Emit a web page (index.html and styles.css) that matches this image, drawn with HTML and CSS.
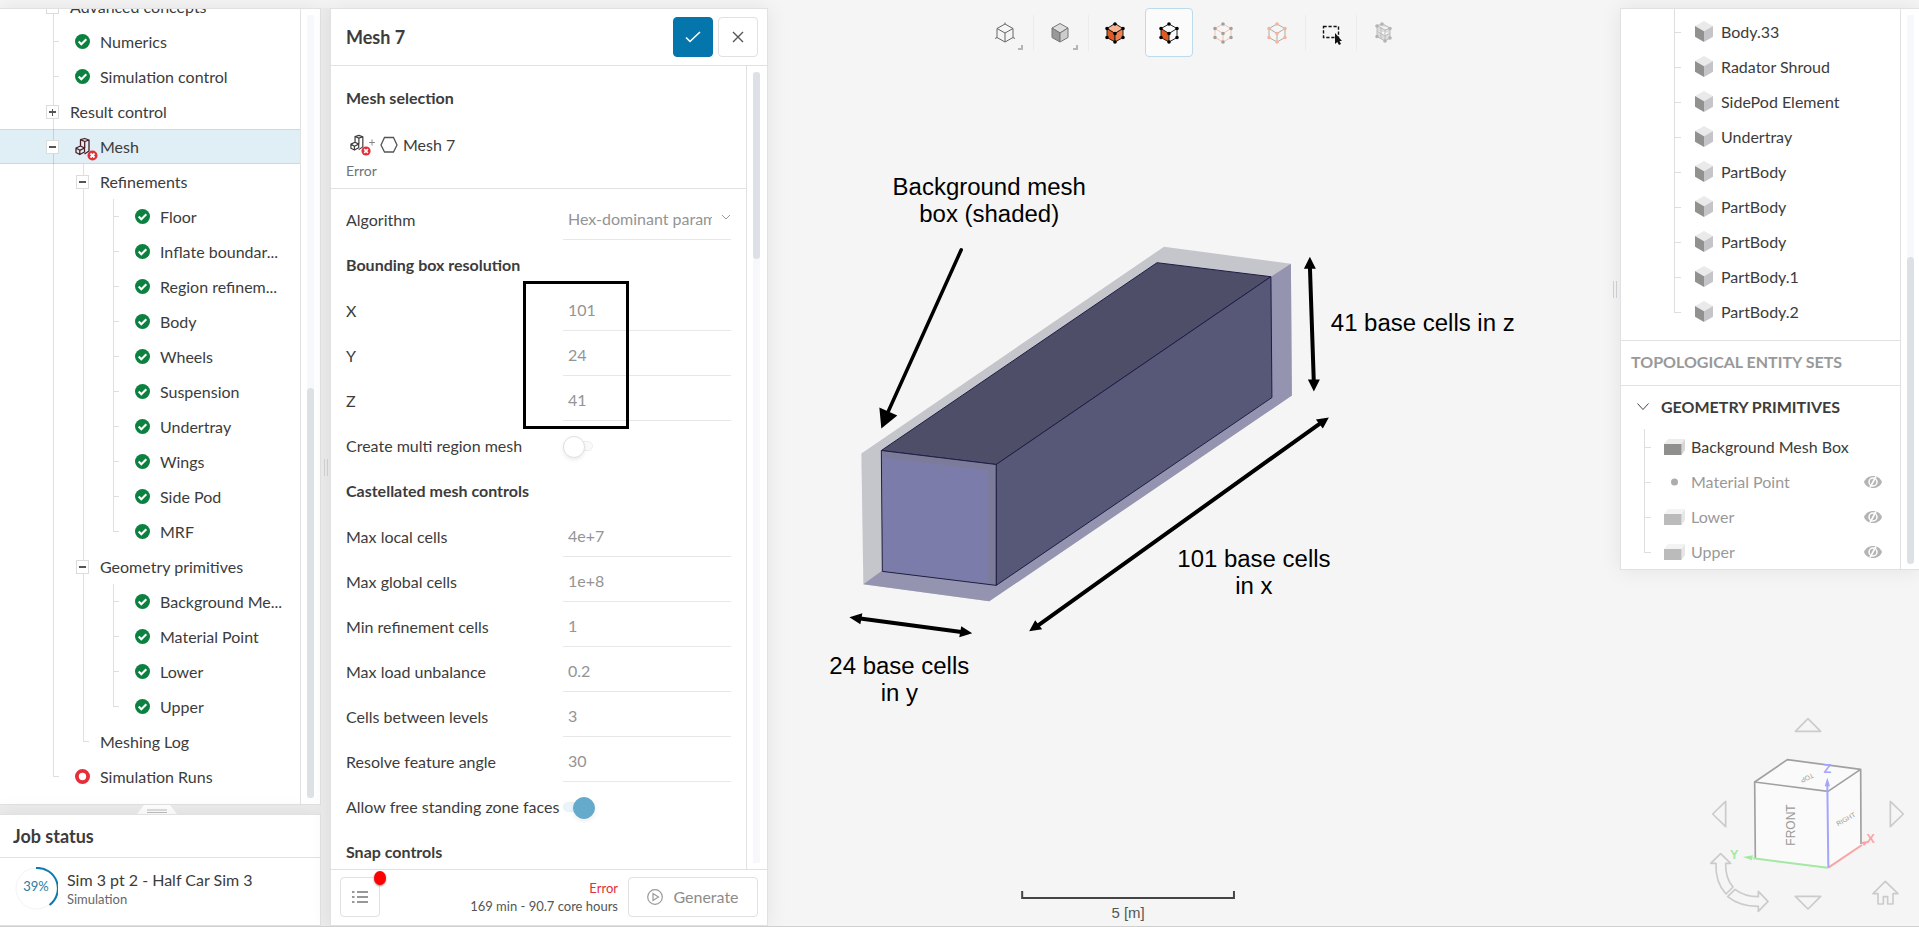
FILE: index.html
```html
<!DOCTYPE html>
<html lang="en">
<head>
<meta charset="utf-8">
<title>Mesh 7</title>
<link rel="stylesheet" href="styles.css">
</head>
<body>
<svg class="defs" width="0" height="0" aria-hidden="true">
  <symbol id="ok" viewBox="0 0 15 15"><circle cx="7.5" cy="7.5" r="7.5" fill="#0b8140"/><path d="M3.7 7.6l2.6 2.7 5-5.1" fill="none" stroke="#fff" stroke-width="2.1"/></symbol>
  <symbol id="ring" viewBox="0 0 15 15"><circle cx="7.5" cy="7.5" r="5.6" fill="#fff" stroke="#e52e38" stroke-width="3.8"/></symbol>
  <symbol id="meshfail" viewBox="0 0 24 25"><path transform="translate(1 1)" d="M4.500 1.700L8.700.5 13 2 8.700 3.500zM4.500 1.700V8M8.700 3.500V10M13 2v11l-4.500 3M0 10l4.500-2 4 2-4.700 2.300zM0 10v4.500l3.800 2 4.700-2.500v-4M3.800 12.300v4.200" fill="none" stroke="currentColor" stroke-width="1.300" stroke-linejoin="round"/><circle cx="17.500" cy="18.500" r="5" fill="#e52e38"/><path d="M15.500 16.500l4 4M19.500 16.500l-4 4" stroke="#fff" stroke-width="1.800"/></symbol>
  <symbol id="cube" viewBox="0 0 18 21"><path d="M9 0l9 5-9 5.300L0 5z" fill="#eaeaea"/><path d="M0 5l9 5.300V21l-9-5.300z" fill="#91918f"/><path d="M18 5l-9 5.300V21l9-5.300z" fill="#c5c5c9"/></symbol>
  <symbol id="box" viewBox="0 0 21 16"><path d="M4 0h17l-3.500 5H0z" fill="#ececec"/><path d="M21 0v11l-3.500 5V5z" fill="#d6d6d6"/><path d="M0 5h17.500v11H0z" fill="#8f8f8e"/></symbol>
  <symbol id="eye" viewBox="0 0 18 12"><path d="M0 6C3-2 15-2 18 6 15 14 3 14 0 6z" fill="#b4b4b4"/><circle cx="9" cy="6" r="4" fill="none" stroke="#fff" stroke-width="1.500"/><path d="M6 11.500L12 .5" stroke="#fff" stroke-width="1.600"/></symbol>
</svg>
<div class="app">
  <div class="sidebar">
    <nav class="panel tree-panel" aria-label="Simulation tree">
      <div class="tree-view">
        <ul class="tree">
          <li><div class="row"><button class="toggle" aria-label="Collapse"></button><span class="label">Advanced concepts</span></div></li>
          <li><div class="row leaf"><svg class="state"><use href="#ok"/></svg><span class="label">Numerics</span></div></li>
          <li><div class="row leaf"><svg class="state"><use href="#ok"/></svg><span class="label">Simulation control</span></div></li>
          <li><div class="row"><button class="toggle plus" aria-label="Expand"></button><span class="label">Result control</span></div></li>
          <li><div class="row selected"><button class="toggle" aria-label="Collapse"></button><svg class="state mesh"><use href="#meshfail"/></svg><span class="label">Mesh</span></div>
            <ul>
              <li><div class="row"><button class="toggle" aria-label="Collapse"></button><span class="label">Refinements</span></div>
                <ul>
                  <li><div class="row leaf"><svg class="state"><use href="#ok"/></svg><span class="label">Floor</span></div></li>
                  <li><div class="row leaf"><svg class="state"><use href="#ok"/></svg><span class="label">Inflate boundar...</span></div></li>
                  <li><div class="row leaf"><svg class="state"><use href="#ok"/></svg><span class="label">Region refinem...</span></div></li>
                  <li><div class="row leaf"><svg class="state"><use href="#ok"/></svg><span class="label">Body</span></div></li>
                  <li><div class="row leaf"><svg class="state"><use href="#ok"/></svg><span class="label">Wheels</span></div></li>
                  <li><div class="row leaf"><svg class="state"><use href="#ok"/></svg><span class="label">Suspension</span></div></li>
                  <li><div class="row leaf"><svg class="state"><use href="#ok"/></svg><span class="label">Undertray</span></div></li>
                  <li><div class="row leaf"><svg class="state"><use href="#ok"/></svg><span class="label">Wings</span></div></li>
                  <li><div class="row leaf"><svg class="state"><use href="#ok"/></svg><span class="label">Side Pod</span></div></li>
                  <li><div class="row leaf"><svg class="state"><use href="#ok"/></svg><span class="label">MRF</span></div></li>
                </ul>
              </li>
              <li><div class="row"><button class="toggle" aria-label="Collapse"></button><span class="label">Geometry primitives</span></div>
                <ul>
                  <li><div class="row leaf"><svg class="state"><use href="#ok"/></svg><span class="label">Background Me...</span></div></li>
                  <li><div class="row leaf"><svg class="state"><use href="#ok"/></svg><span class="label">Material Point</span></div></li>
                  <li><div class="row leaf"><svg class="state"><use href="#ok"/></svg><span class="label">Lower</span></div></li>
                  <li><div class="row leaf"><svg class="state"><use href="#ok"/></svg><span class="label">Upper</span></div></li>
                </ul>
              </li>
              <li><div class="row leaf"><span class="label">Meshing Log</span></div></li>
            </ul>
          </li>
          <li><div class="row leaf"><svg class="state"><use href="#ring"/></svg><span class="label">Simulation Runs</span></div></li>
        </ul>
      </div>
      <div class="scroll low"><span class="thumb"></span></div>
    </nav>
    <div class="splitter"><svg width="40" height="9" viewBox="0 0 40 9"><path d="M0 9L7 0h26l7 9z" fill="#fff"/><path d="M10 5h20M10 7.500h20" stroke="#bdbdbd"/></svg></div>
    <section class="panel jobs">
      <h2>Job status</h2>
      <div class="job">
        <svg class="progress" width="43" height="43" viewBox="0 0 43 43"><circle cx="21.500" cy="21.500" r="20.500" fill="none" stroke="#f3f3f3"/><path d="M21 1a20.500 20.500 0 0 1 13.500 37" fill="none" stroke="#0b7bb0" stroke-width="2"/><text x="21" y="24" text-anchor="middle">39%</text></svg>
        <div><div class="job-name">Sim 3 pt 2 - Half Car Sim 3</div><div class="job-kind">Simulation</div></div>
      </div>
    </section>
  </div>
  <div class="gutter"><span class="grip"></span></div>

  <form class="panel settings">
    <header>
      <h1>Mesh 7</h1>
      <button type="button" class="btn primary" aria-label="Save"><svg width="16" height="12" viewBox="0 0 16 12"><path d="M1 6.500l4 4L15 1" fill="none" stroke="#fff" stroke-width="1.600"/></svg></button>
      <button type="button" class="btn" aria-label="Close"><svg width="12" height="12" viewBox="0 0 12 12"><path d="M1 1l10 10M11 1L1 11" stroke="#555" stroke-width="1.400"/></svg></button>
    </header>
    <div class="settings-body">
      <div class="fields">
        <div class="selection">
          <h3>Mesh selection</h3>
          <div class="mesh-line"><svg class="mesh-icon" width="28" height="22" viewBox="0 0 28 22"><use href="#meshfail" width="22" height="23"/><path d="M22 5.500v6M19 8.500h6" stroke="#888"/></svg><svg width="18" height="18" viewBox="0 0 18 18"><path d="M4.500 1.500h9L17 9l-3.500 7h-9L1 9z" fill="none" stroke="#555" stroke-width="1.300"/></svg><span>Mesh 7</span></div>
          <div class="mesh-state">Error</div>
        </div>
        <div class="controls">
          <div class="field"><label for="alg">Algorithm</label><span class="select"><select id="alg"><option>Hex-dominant parametric</option></select><svg width="10" height="6" viewBox="0 0 10 6"><path d="M1 1l4 4 4-4" fill="none" stroke="#999"/></svg></span></div>
          <h3>Bounding box resolution</h3>
          <div class="resolution">
            <div class="field"><label for="rx">X</label><input id="rx" value="101"></div>
            <div class="field"><label for="ry">Y</label><input id="ry" value="24"></div>
            <div class="field"><label for="rz">Z</label><input id="rz" value="41"></div>
            <span class="marker"></span>
          </div>
          <div class="field"><label for="multi">Create multi region mesh</label><input id="multi" class="switch" type="checkbox"></div>
          <h3>Castellated mesh controls</h3>
          <div class="field"><label for="mlc">Max local cells</label><input id="mlc" value="4e+7"></div>
          <div class="field"><label for="mgc">Max global cells</label><input id="mgc" value="1e+8"></div>
          <div class="field"><label for="mrc">Min refinement cells</label><input id="mrc" value="1"></div>
          <div class="field"><label for="mlu">Max load unbalance</label><input id="mlu" value="0.2"></div>
          <div class="field"><label for="cbl">Cells between levels</label><input id="cbl" value="3"></div>
          <div class="field"><label for="rfa">Resolve feature angle</label><input id="rfa" value="30"></div>
          <div class="field"><label for="zone">Allow free standing zone faces</label><input id="zone" class="switch" type="checkbox" checked></div>
          <h3>Snap controls</h3>
        </div>
      </div>
      <div class="scroll"><span class="thumb"></span></div>
    </div>
    <footer>
      <button type="button" class="btn list" aria-label="Event log"><svg width="16" height="12" viewBox="0 0 16 12"><path d="M0 1h2.500M0 6h2.500M0 11h2.500M5 1h11M5 6h11M5 11h11" stroke="#777" stroke-width="1.400"/></svg><span class="dot"></span></button>
      <div class="estimate"><span class="error">Error</span><span>169 min - 90.7 core hours</span></div>
      <button type="button" class="btn generate"><svg width="16" height="16" viewBox="0 0 16 16"><g fill="none" stroke="#999" stroke-width="1.200"><circle cx="8" cy="8" r="7.300"/><path d="M6 4.500v7L11.500 8z"/></g></svg>Generate</button>
    </footer>
  </form>

  <main class="viewer">
    <svg class="scene" viewBox="768 0 852 927">
      <path d="M1164 247l127 17 1 132-303 206-126-17-2-131z" fill="#c5c5cc"/>
      <path d="M1271 277l20-13 1 132-303 206-126-17 19-14z" fill="#9494b0"/>
      <g stroke="#1d1d45" stroke-linejoin="round">
        <path d="M1157 263l114 14-275 188-115-14z" fill="#4e4e69"/>
        <path d="M1271 277l1 121-276 188V465z" fill="#575778"/>
        <path d="M881 451l115 14v121l-114-14z" fill="#7c7c9a"/>
      </g>
      <path d="M882 458l106 13v113l-105-13z" fill="#7c7cab"/>
      <g stroke="#000" stroke-width="4">
        <path d="M961 250l-74 164" stroke-width="3.500" stroke-linecap="round"/>
        <path d="M1310 266l4 118M1320 424l-282 202M858 619l105 14"/>
      </g>
      <path d="M881 429l-2-21 18 8zM1310 257l6 12h-12zM1314 392l6-12h-12zM1329 418l-6 11-7-9zM1029 632l6-11 7 9zM849 618l13-4-2 11zM972 634l-13 4 2-11z"/>
      <g class="note" text-anchor="middle">
        <text x="989" y="195">Background mesh</text><text x="989" y="222">box (shaded)</text>
        <text x="1423" y="331">41 base cells in z</text>
        <text x="1254" y="568">101 base cells</text><text x="1254" y="595">in x</text>
        <text x="899" y="675">24 base cells</text><text x="899" y="702">in y</text>
      </g>
      <path d="M1022 892v7h212v-7" fill="none" stroke="#444" stroke-width="2"/>
      <text class="scale" x="1128" y="919" text-anchor="middle">5 [m]</text>
    </svg>
    <div class="toolbar">
      <button aria-label="Wireframe"><svg viewBox="0 0 24 24"><path d="M12 3l8 4.500v9L12 21l-8-4.500v-9zM4 7.500l8 4.500 8-4.500M12 12v9M12 1.500V3M2 17.500l2-1M22 17.500l-2-1" fill="none" stroke="#666"/></svg><i class="corner"></i></button>
      <button aria-label="Shaded" class="sep"><svg viewBox="0 0 24 24"><g stroke="#777"><path d="M12 2.500l8 4.500-8 5-8-5z" fill="#ddd"/><path d="M4 7l8 5v9l-8-4.500z" fill="#999"/><path d="M20 7l-8 5v9l8-4.500z" fill="#ccc"/></g></svg><i class="corner"></i></button>
      <button aria-label="Volumes" class="sep"><svg viewBox="0 0 24 24"><g stroke="#222"><path d="M12 2.500l8 5-8 5-8-5z" fill="#f6b491"/><path d="M4 7.500l8 5V21l-8-4.500z" fill="#df5a20"/><path d="M20 7.500l-8 5V21l8-4.500z" fill="#ef8150"/></g><path class="dots" d="M12 3h0M4 7.500h0M20 7.500h0M12 12.500h0M4 16.500h0M20 16.500h0M12 21h0" stroke="#000"/></svg></button>
      <button aria-label="Faces" class="active"><svg viewBox="0 0 24 24"><path d="M4 7.500l8 5V21l-8-4.500z" fill="#df5a20"/><path d="M12 3l8 4.500v9L12 21l-8-4.500v-9zM4 7.500l8 5 8-5M12 12.500V21" fill="none" stroke="#222"/><path class="dots" d="M12 3h0M4 7.500h0M20 7.500h0M12 12.500h0M4 16.500h0M20 16.500h0M12 21h0" stroke="#000"/></svg></button>
      <button aria-label="Edges"><svg viewBox="0 0 24 24"><path d="M12 3l8 4.500v9L12 21l-8-4.500v-9zM4 7.500l8 5 8-5M12 12.500V21" fill="none" stroke="#f7c3aa"/><path class="dots" d="M12 3h0M4 7.500h0M20 7.500h0M12 12.500h0M4 16.500h0M20 16.500h0M12 21h0" stroke="#a0a0a0"/></svg></button>
      <button aria-label="Vertices"><svg viewBox="0 0 24 24"><path d="M12 3l8 4.500v9L12 21l-8-4.500v-9zM4 7.500l8 5 8-5M12 12.500V21" fill="none" stroke="#ababab"/><path class="dots" d="M12 3h0M4 7.500h0M20 7.500h0M12 12.500h0M4 16.500h0M20 16.500h0M12 21h0" stroke="#f7b597"/></svg></button>
      <button aria-label="Box selection" class="sep"><svg viewBox="0 0 24 24"><path d="M3.500 5.500h15v11h-15z" fill="none" stroke="#111" stroke-width="1.400" stroke-dasharray="3.200 1.800"/><path d="M15 12v11l2.300-2 1.700 3 2-1-1.500-3h2.500z" fill="#111"/></svg></button>
      <button aria-label="Clipping" class="sep last"><svg viewBox="0 0 24 24"><path d="M6 4.500l6-1.500 7 4v10l-5 3-8-4.500zM6 4.500l8 4.500 5-2M14 9v11M6 10l8 5 5-3M10 6.500v11.500" fill="#dcdcdc" stroke="#bcbcbc"/><path class="dots" d="M11 3h0M6 5h0M19 7.500h0M6 15.500h0M14 20h0M19 17h0" stroke="#b4b4b4"/></svg></button>
    </div>
    <span class="grip"></span>
  </main>

  <div class="rail">
    <aside class="panel geometry">
      <div class="geo-view">
        <ul class="parts">
          <li><svg><use href="#cube"/></svg>Body.33</li>
          <li><svg><use href="#cube"/></svg>Radator Shroud</li>
          <li><svg><use href="#cube"/></svg>SidePod Element</li>
          <li><svg><use href="#cube"/></svg>Undertray</li>
          <li><svg><use href="#cube"/></svg>PartBody</li>
          <li><svg><use href="#cube"/></svg>PartBody</li>
          <li><svg><use href="#cube"/></svg>PartBody</li>
          <li><svg><use href="#cube"/></svg>PartBody.1</li>
          <li><svg><use href="#cube"/></svg>PartBody.2</li>
        </ul>
        <h4 class="muted">TOPOLOGICAL ENTITY SETS</h4>
        <h4 class="open"><svg width="12" height="7" viewBox="0 0 12 7"><path d="M.5.500l5.500 6 5.500-6" fill="none" stroke="#444"/></svg>GEOMETRY PRIMITIVES</h4>
        <ul class="prims">
          <li><svg class="kind"><use href="#box"/></svg>Background Mesh Box</li>
          <li class="hidden"><svg class="kind" viewBox="0 0 21 16"><circle cx="10.500" cy="8" r="3.500" fill="#777"/></svg>Material Point<button aria-label="Show"><svg><use href="#eye"/></svg></button></li>
          <li class="hidden"><svg class="kind"><use href="#box"/></svg>Lower<button aria-label="Show"><svg><use href="#eye"/></svg></button></li>
          <li class="hidden"><svg class="kind"><use href="#box"/></svg>Upper<button aria-label="Show"><svg><use href="#eye"/></svg></button></li>
        </ul>
      </div>
      <div class="scroll geo"><span class="thumb"></span></div>
    </aside>
    <svg class="navcube" viewBox="0 0 687 681">
      <g fill="none" stroke="#cbcbcb" stroke-width="5" stroke-linejoin="round">
        <path d="M354 59l38 38h-76zM354 630l38-38h-76zM68 345l39-38v76zM640 345l-39-38v76z"/>
        <path d="M92 464l30 29h-15c-1 30 5 52 22 71l-21 21c-23-25-32-55-30-92H62z"/>
        <path d="M135 571c18 14 40 22 70 22v-16l29 30-29 30v-15c-38 0-68-9-92-29z"/>
        <path d="M586 547l38 37h-15v31h-16v-22h-13v22h-16v-31h-15z"/>
      </g>
      <path d="M194 249l98-67 221 29v224L415 506l-219-29z" fill="#fafafa"/>
      <path d="M196 477l-2-228 98-67 220 29 1 224M194 249l220 28 98-66" fill="none" stroke="#a0a0a0" stroke-width="5" stroke-linejoin="round"/>
      <text class="face" transform="translate(315 440) rotate(-90)">FRONT</text>
      <text class="face small" transform="translate(444 382) rotate(-30)">RIGHT</text>
      <text class="face tiny" transform="translate(367 222) rotate(155)">TOP</text>
      <g stroke-width="6"><path d="M415 506L516 438" stroke="#f9a5a5"/><path d="M413 506L190 478" stroke="#a3e8a3"/><path d="M415 506L412 258" stroke="#a5a5fb"/></g>
      <path d="M536 426l-14 15-9-12z" fill="#f9a5a5"/><path d="M159 474l30-5-3 15z" fill="#a3e8a3"/><path d="M412 236l8 26h-16z" fill="#a5a5fb"/>
      <g class="axis" text-anchor="middle"><text x="412" y="223" fill="#a5a5fb">Z</text><text x="542" y="433" fill="#f9a5a5">X</text><text x="133" y="481" fill="#a3e8a3">Y</text></g>
    </svg>
  </div>
</div>
</body>
</html>
```
FILE: styles.css
```css
* { box-sizing: border-box; }
body { margin: 0; background: #f5f5f5; color: #3c3c3c; font: 16px/20px Lato, "Liberation Sans", sans-serif; }
ul { list-style: none; margin: 0; padding: 0; }
h1, h2, h3, h4 { margin: 0; font-weight: 700; }
button, input, select { font: inherit; color: inherit; margin: 0; }
svg { display: block; flex: none; }
.defs { position: absolute; }
.app { display: flex; height: 100vh; padding-top: 8px; border-bottom: 1px solid #cfcfcf; overflow: hidden; }
.panel { background: #fff; border: 1px solid #e1e1e1; box-shadow: 0 0 20px rgba(0, 0, 0, .08); }

/* simulation tree */
.sidebar { display: flex; flex-direction: column; flex: none; width: 321px; }
.tree-panel { display: flex; flex: 1; min-height: 0; border-left: 0; }
.tree-view { display: flex; flex-direction: column; justify-content: flex-end; flex: 1; min-width: 0; overflow: hidden; padding-bottom: 10px; border-right: 1px solid #e1e1e1; }
.tree li { position: relative; --level: 0px; }
.tree ul li { --level: 30px; }
.tree ul ul li { --level: 60px; }
.tree li::before { content: ""; position: absolute; z-index: 1; left: calc(53px + var(--level)); top: 0; bottom: 0; border-left: 1px solid rgba(0, 0, 0, .12); }
.tree li:last-child::before { bottom: auto; height: 18px; }
.row { position: relative; display: flex; align-items: center; height: 35px; padding: 0 12px 0 calc(46px + var(--level)); }
.row.selected { background: #e0eef5; border: solid #bcdfec; border-width: 1px 0; }
.toggle { position: relative; z-index: 2; flex: none; width: 13px; height: 14px; margin-right: 11px; padding: 0; border: 1px solid #dcdcdc; background: #fff; }
.toggle::before { content: ""; position: absolute; left: 2px; top: 5px; width: 7px; height: 2px; background: #555; }
.toggle.plus::after { content: ""; position: absolute; left: 5px; top: 3px; width: 1px; height: 7px; background: #555; }
.leaf::before { content: ""; width: 5px; margin: 0 11px 0 8px; border-top: 1px solid #dedede; }
.state { width: 15px; height: 15px; margin: 0 10px 0 5px; }
.state.mesh { width: 24px; height: 25px; margin: 5px 1px 0 5px; color: #4a1d24; }
.label { white-space: nowrap; }
.scroll { display: flex; flex: none; width: 19px; padding: 6px; background: linear-gradient(#f6f8fb, #f6f8fb) 6px 6px / 7px calc(100% - 12px) no-repeat; }
.thumb { width: 7px; height: 187px; border-radius: 4px; background: #dde0e6; }
.low { align-items: flex-end; }
.low .thumb { height: 410px; background: #dce1e5; }
.splitter { display: flex; justify-content: center; align-items: flex-end; height: 9px; padding-right: 7px; background: #ececec; }
.jobs { border-left: 0; }
.jobs h2 { height: 43px; padding-left: 13px; border-bottom: 1px solid #e1e1e1; font-size: 18px; line-height: 42px; }
.job { display: flex; align-items: center; gap: 9px; height: 67px; padding: 0 15px 6px; }
.progress text { fill: #2a7ba2; font-size: 13px; }
.job-kind { color: #666; font-size: 13px; line-height: 18px; }
.gutter { display: flex; align-items: center; justify-content: center; flex: none; width: 9px; background: #ececec; }
.grip { width: 4px; height: 17px; border: solid #d0d4d8; border-width: 0 1px; }

/* mesh settings */
.settings { display: flex; flex-direction: column; flex: none; width: 438px; }
.settings header { display: flex; align-items: center; gap: 5px; height: 57px; padding: 0 9px 0 15px; border-bottom: 1px solid #e1e1e1; }
h1 { flex: 1; font-size: 18px; }
.btn { position: relative; display: flex; align-items: center; justify-content: center; width: 40px; height: 40px; padding: 0; border: 1px solid #e1e1e1; border-radius: 4px; background: #fff; }
.btn.primary { background: #0576ab; border-color: #0576ab; }
.settings-body { display: flex; flex: 1; min-height: 0; }
.settings-body .scroll { width: 20px; }
.fields { flex: 1; min-width: 0; overflow: hidden; border-right: 1px solid #e1e1e1; }
h3 { font-size: 16px; }
.selection { height: 123px; padding: 22px 15px 0; border-bottom: 1px solid #e1e1e1; }
.mesh-line { display: flex; align-items: center; gap: 5px; height: 34px; margin: 20px 0 0 4px; }
.mesh-icon { margin-right: -3px; }
.mesh-state { color: #6d7378; font-size: 14px; line-height: 18px; }
.controls { padding: 6px 15px 0; }
.controls h3 { height: 46px; line-height: 50px; }
.field { display: grid; grid-template-columns: 217px 1fr; align-items: center; height: 45px; }
.field label { white-space: nowrap; padding-top: 5px; }
.field input:not(.switch), .select { width: 168px; height: 45px; padding: 3px 5px 0; border: 0; border-bottom: 1px solid #e8e8e8; background: none; color: #949494; border-radius: 0; }
.select { display: flex; align-items: center; justify-content: space-between; padding: 0; }
.select select { appearance: none; width: 149px; height: 40px; padding: 4px 0 0 5px; border: 0; background: none; color: #949494; overflow: hidden; text-overflow: clip; }
.resolution { position: relative; }
.marker { position: absolute; z-index: 1; left: 177px; top: -5px; bottom: -8px; width: 106px; border: 3px solid #000; }
.switch { appearance: none; position: relative; width: 30px; height: 10px; margin-top: 4px; border: 1px solid #eee; border-radius: 5px; background: #fafafa; }
.switch::before { content: ""; position: absolute; left: -1px; top: -6px; width: 20px; height: 20px; border: 1px solid #e0e0e0; border-radius: 50%; background: #fff; box-shadow: 0 2px 4px rgba(0, 0, 0, .08); }
.switch:checked { background: #e8f5fa; }
.switch:checked::before { left: 9px; background: #66aacb; border-color: #66aacb; }
.settings footer { display: flex; align-items: center; gap: 10px; height: 56px; padding: 0 9px 2px; border-top: 1px solid #e1e1e1; }
.dot { position: absolute; right: -7px; top: -7px; width: 12px; height: 14px; border-radius: 50%; background: #f00; box-shadow: 0 1px 2px #888; }
.estimate { flex: 1; display: flex; flex-direction: column; text-align: right; font-size: 13px; line-height: 18px; color: #555; }
.error { color: #e0303c; }
.btn.generate { width: 130px; gap: 10px; color: #8c8c8c; }

/* 3D viewer */
.viewer { position: relative; flex: 1; min-width: 0; }
.scene { position: absolute; left: 0; top: -8px; width: 100%; height: calc(100% + 8px); }
.note { font: 24px "Liberation Sans", sans-serif; }
.scale { font: 15px "Liberation Sans", sans-serif; fill: #555; }
.toolbar { position: relative; display: flex; justify-content: center; gap: 6px; }
.toolbar button { position: relative; display: flex; align-items: center; justify-content: center; width: 48px; height: 49px; padding: 0; border: 1px solid transparent; border-radius: 4px; background: none; }
.toolbar svg { width: 24px; height: 24px; }
.toolbar .sep { margin-left: 1px; }
.toolbar .sep.last { margin-left: -3px; }
.toolbar .sep::before { content: ""; position: absolute; left: -4px; top: 6px; height: 36px; border-left: 1px solid #ececec; }
.toolbar .active { border-color: #bcdcec; background: #fbfbfb; }
.dots { stroke-width: 3.6px; stroke-linecap: round; }
.corner { position: absolute; right: 5px; bottom: 6px; width: 5px; height: 5px; border: solid #b5b5b5; border-width: 0 2px 2px 0; }
.viewer .grip { position: absolute; right: 3px; top: 273px; }

/* geometry tree and orientation cube */
.rail { display: flex; flex-direction: column; justify-content: space-between; align-items: flex-end; flex: none; width: 299px; position: relative; }
.geometry { display: flex; width: 100%; border-right: 0; }
.geo-view { flex: 1; min-width: 0; border-right: 1px solid #e1e1e1; }
.parts { padding: 5px 0 11px; background: linear-gradient(#dedede, #dedede) 53px 0 / 1px 6px no-repeat; }
.parts li, .prims li { position: relative; display: flex; align-items: center; height: 35px; padding-left: 53px; }
.prims li { padding-left: 23px; }
.parts li::before, .prims li::before { content: ""; align-self: flex-start; width: 6px; height: 18px; border: solid #dedede; border-width: 0 0 1px 1px; }
.parts li:not(:last-child)::after, .prims li:not(:last-child)::after { content: ""; position: absolute; left: 53px; top: 0; bottom: 0; border-left: 1px solid #dedede; }
.prims li:not(:last-child)::after { left: 23px; }
.parts svg { width: 18px; height: 21px; margin: 0 8px 0 14px; }
.kind { width: 21px; height: 16px; margin: 0 6px 0 13px; }
.hidden { color: #999; }
.hidden .kind { opacity: .6; }
.prims button { margin-left: auto; margin-right: 18px; padding: 0; border: 0; background: none; }
.prims button svg { width: 18px; height: 12px; }
h4 { display: flex; align-items: center; gap: 12px; height: 45px; padding: 0 0 2px 16px; border-top: 1px solid #e1e1e1; font-size: 16px; }
h4.open { height: 44px; }
h4.muted { padding-left: 10px; color: #999; }
.geo { align-items: flex-end; width: 18px; padding: 5px; background-position: 6px 6px; }
.geo .thumb { height: 307px; margin-left: 1px; background: #dce1e5; }
.navcube { width: 229px; height: 227px; }
.face { font: 36px "Liberation Sans", sans-serif; fill: #999; }
.face.small { font-size: 20px; }
.face.tiny { font-size: 20px; }
.axis { font: 700 38px "Liberation Sans", sans-serif; }
```
